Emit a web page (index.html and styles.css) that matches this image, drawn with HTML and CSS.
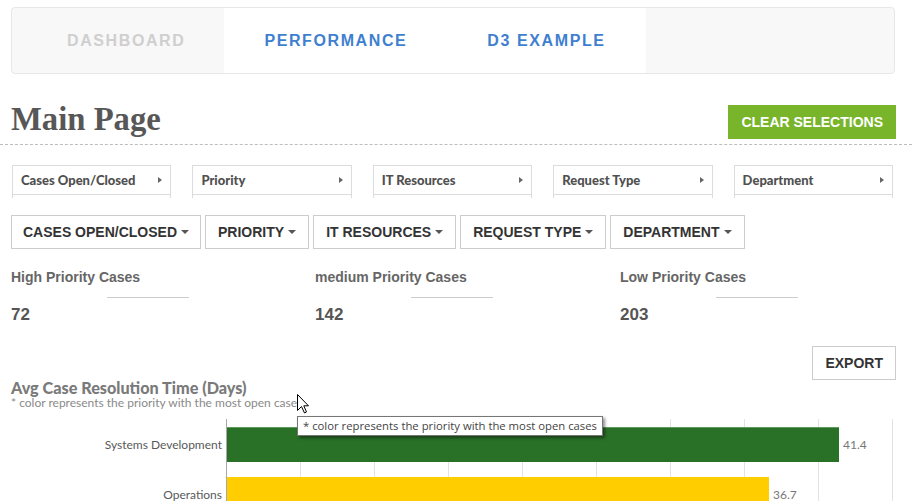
FILE: index.html
```html
<!DOCTYPE html>
<html>
<head>
<meta charset="utf-8">
<link rel="stylesheet" href="styles.css">
</head>
<body>
<nav class="nav">
  <ul class="tabs">
    <li class="tab tab-muted">DASHBOARD</li>
    <li class="tab tab-link">PERFORMANCE</li>
    <li class="tab tab-link">D3 EXAMPLE</li>
  </ul>
</nav>

<header class="page-header">
  <h1 class="title">Main Page</h1>
  <button class="btn-clear">CLEAR SELECTIONS</button>
</header>

<div class="filters">
  <div class="filter"><div class="filter-head"><span>Cases Open/Closed</span><span class="tri"></span></div></div>
  <div class="filter"><div class="filter-head"><span>Priority</span><span class="tri"></span></div></div>
  <div class="filter"><div class="filter-head"><span>IT Resources</span><span class="tri"></span></div></div>
  <div class="filter"><div class="filter-head"><span>Request Type</span><span class="tri"></span></div></div>
  <div class="filter"><div class="filter-head"><span>Department</span><span class="tri"></span></div></div>
</div>

<div class="dropdowns">
  <button class="dd dd-first">CASES OPEN/CLOSED <span class="caret"></span></button>
  <button class="dd">PRIORITY <span class="caret"></span></button>
  <button class="dd">IT RESOURCES <span class="caret"></span></button>
  <button class="dd">REQUEST TYPE <span class="caret"></span></button>
  <button class="dd">DEPARTMENT <span class="caret"></span></button>
</div>

<div class="kpis">
  <div class="kpi"><div class="kpi-title">High Priority Cases</div><div class="kpi-line"></div><div class="kpi-num">72</div></div>
  <div class="kpi"><div class="kpi-title">medium Priority Cases</div><div class="kpi-line"></div><div class="kpi-num">142</div></div>
  <div class="kpi"><div class="kpi-title">Low Priority Cases</div><div class="kpi-line"></div><div class="kpi-num">203</div></div>
</div>

<div class="export-row"><button class="btn-export">EXPORT</button></div>

<section class="chart">
  <div class="chart-title">Avg Case Resolution Time (Days)</div>
  <div class="chart-sub">* color represents the priority with the most open cases</div>
  <div class="chart-body">
    <div class="labels">
      <div class="cat">Systems Development</div>
      <div class="cat">Operations</div>
    </div>
    <div class="plot">
      <div class="bar-row"><div class="bar bar-green" style="width:612px"></div><span class="val">41.4</span></div>
      <div class="bar-row"><div class="bar bar-yellow" style="width:542px"></div><span class="val">36.7</span></div>
    </div>
  </div>
  <div class="tooltip">* color represents the priority with the most open cases</div>
  <svg class="cursor" width="13" height="20" viewBox="0 0 13 20"><path d="M0.5 0.5 L0.5 16.5 L4.5 12.5 L7.5 19 L9.5 18 L6.8 11.8 L11.5 11.8 Z" fill="#fff" stroke="#000" stroke-width="1"/></svg>
</section>
</body>
</html>
```
FILE: styles.css
```css
html, body { margin: 0; padding: 0; background: #fff; }
body { font-family: "Liberation Sans", Arial, sans-serif; color: #333; overflow: hidden; }

.nav {
  margin: 7px 24px 0 11px;
  height: 65px;
  background: #f8f8f8;
  border: 1px solid #e7e7e7;
  border-radius: 4px;
}
.tabs { list-style: none; margin: 0; padding: 0 0 0 15px; display: flex; height: 65px; }
.tab {
  padding: 0 40px;
  line-height: 65px;
  font-weight: bold;
  font-size: 16px;
  letter-spacing: 1.6px;
}
.tab-muted { color: #cfcfcf; padding-right: 39px; }
.tab-link { color: #3f7fd0; background: #fff; }

.page-header {
  margin-top: 28px;
  margin-right: 7px;
  padding: 0 16px 0 11px;
  height: 42px;
  border-bottom: 1px dashed #bdbdbd;
  display: flex;
  justify-content: space-between;
  align-items: flex-start;
}
.title {
  margin: 0;
  font-family: "Liberation Serif", "Times New Roman", serif;
  font-size: 32.7px;
  line-height: 35px;
  font-weight: bold;
  color: #575757;
}
.btn-clear {
  margin-top: 3px;
  height: 34px;
  padding: 0 13px;
  border: 0;
  background: #79b52b;
  color: #fff;
  font-family: "Liberation Sans", Arial, sans-serif;
  font-weight: bold;
  font-size: 14px;
}

.filters {
  margin: 20px 26px 0 12px;
  display: grid;
  grid-template-columns: repeat(5, 1fr);
  column-gap: 21px;
}
.filter {
  border: 1px solid #dcdcdc;
  border-bottom: 0;
  height: 32px;
}
.filter-head {
  height: 28px;
  border-bottom: 1px solid #dcdcdc;
  display: flex;
  align-items: center;
  justify-content: space-between;
  padding: 0 8px 0 8px;
  font-family: Lato, "Open Sans", sans-serif;
  font-weight: 900;
  font-size: 13px;
  color: #505050;
}
.tri {
  width: 0; height: 0;
  border-left: 4px solid #666;
  border-top: 3px solid transparent;
  border-bottom: 3px solid transparent;
}

.dropdowns {
  margin: 17px 0 0 11px;
  display: flex;
  gap: 4px;
}
.dd {
  height: 34px;
  padding: 0 12px;
  background: #fff;
  border: 1px solid #ccc;
  color: #333;
  font-family: "Liberation Sans", Arial, sans-serif;
  font-weight: bold;
  font-size: 14px;
  display: flex;
  align-items: center;
  gap: 4px;
}
.dd-first { padding: 0 11px; }
.caret {
  width: 0; height: 0;
  border-top: 4px solid #555;
  border-left: 4px solid transparent;
  border-right: 4px solid transparent;
}

.kpis {
  margin: 18px 0 0 11px;
  display: grid;
  grid-template-columns: 304px 305px 1fr;
}
.kpi-title { font-size: 14px; line-height: 20px; font-weight: bold; color: #666; }
.kpi-line { margin: 10px 0 0 96px; width: 82px; height: 1px; background: #ccc; }
.kpi-num { margin-top: 7px; font-size: 17px; line-height: 20px; font-weight: bold; color: #555; }

.export-row { margin: 21px 23px 0 0; display: flex; justify-content: flex-end; }
.btn-export {
  height: 34px;
  padding: 0 12px;
  background: #fff;
  border: 1px solid #ccc;
  color: #333;
  font-family: "Liberation Sans", Arial, sans-serif;
  font-weight: bold;
  font-size: 14px;
}

.chart { position: relative; }
.chart-title {
  margin: -1px 0 0 11px;
  font-family: Lato, sans-serif;
  font-weight: 900;
  font-size: 16.2px;
  line-height: 17px;
  color: #7a7a7a;
}
.chart-sub {
  margin: 0 0 0 11px;
  font-family: Lato, sans-serif;
  font-size: 12px;
  line-height: 14px;
  color: #8a8a8a;
}
.chart-body { margin-top: 9px; display: flex; }
.labels { width: 222px; padding-right: 4px; padding-top: 8px; }
.cat {
  height: 35px;
  margin-bottom: 15px;
  display: flex;
  align-items: center;
  justify-content: flex-end;
  font-family: Lato, sans-serif;
  font-size: 12px;
  color: #595959;
}
.plot {
  width: 666px;
  height: 100px;
  border-left: 1px solid #a8a8a8;
  padding-top: 8px;
  background-image: linear-gradient(to right, transparent 73px, #e2e2e2 73px, #e2e2e2 74px);
  background-size: 74px 100%;
  background-repeat: repeat-x;
}
.bar-row { height: 35px; margin-bottom: 15px; display: flex; align-items: center; }
.bar { height: 35px; }
.bar-green { background: #2a7128; box-shadow: inset 0 1px 0 #5e9a5c; }
.bar-yellow { background: #ffcd00; }
.val {
  margin-left: 4px;
  font-family: Lato, sans-serif;
  font-size: 12px;
  color: #777;
}

.tooltip {
  position: absolute;
  left: 297px;
  top: 37px;
  height: 18px;
  padding: 0 5px;
  background: #fff;
  border: 1px solid #767676;
  box-shadow: 2px 2px 3px rgba(0,0,0,0.45);
  font-family: "Open Sans", sans-serif;
  font-size: 11.3px;
  line-height: 18px;
  color: #444;
  white-space: nowrap;
}
.cursor { position: absolute; left: 297px; top: 15px; }
```
